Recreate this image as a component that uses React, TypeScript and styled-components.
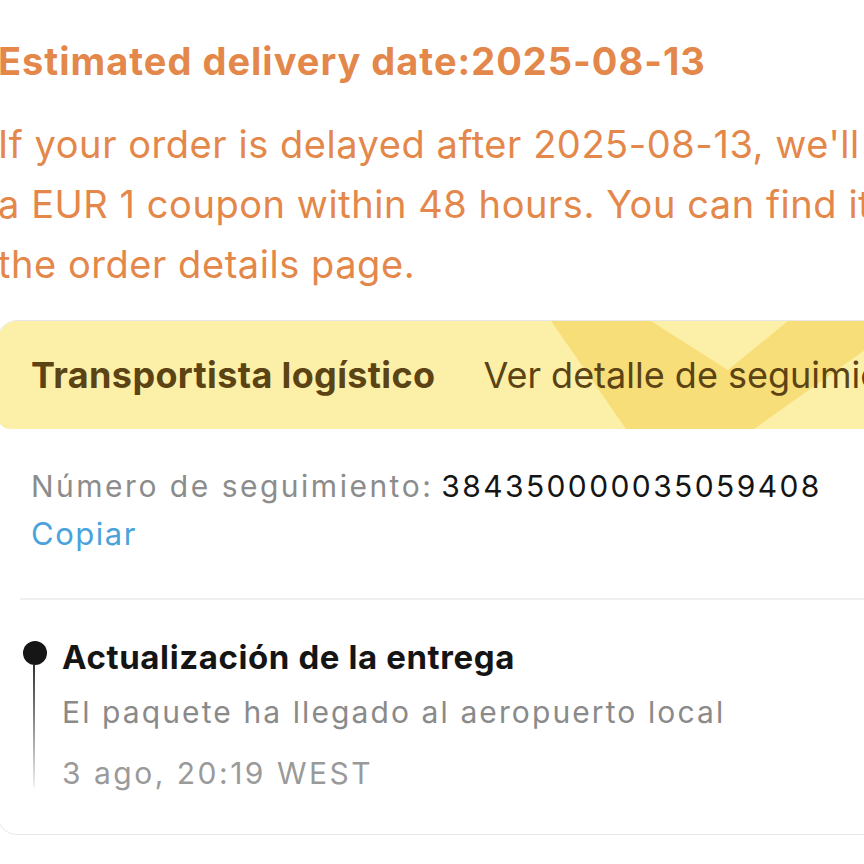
import React from 'react';
import styled, { createGlobalStyle } from 'styled-components';

const GlobalStyle = createGlobalStyle`
  html, body {
    margin: 0;
    padding: 0;
    background: #ffffff;
    overflow: hidden;
  }
  body {
    font-family: Inter, Lato, sans-serif;
  }
`;

const ORANGE = '#e3884a';
const BROWN = '#5b4314';

const Page = styled.div`
  width: 864px;
  height: 864px;
  overflow: hidden;
  background: #ffffff;
`;

const Content = styled.div`
  width: 940px;
  margin-left: -3px;
  padding-top: 35px;
  display: flex;
  flex-direction: column;
`;

const Notice = styled.section`
  display: flex;
  flex-direction: column;
  gap: 27px;
  padding-left: 1px;
  color: ${ORANGE};
`;

const NoticeTitle = styled.h2`
  margin: 0;
  font-size: 38px;
  line-height: 52px;
  font-weight: 700;
  letter-spacing: 1px;
  white-space: nowrap;
`;

const NoticeText = styled.p`
  margin: 0;
  font-size: 38px;
  line-height: 60px;
  font-weight: 400;
  letter-spacing: 0.55px;
  white-space: nowrap;
`;

const Card = styled.div`
  margin-top: 26px;
  border: 1.5px solid #e7e7e7;
  border-radius: 20px;
  overflow: hidden;
  padding-bottom: 33px;
`;

const Banner = styled.div`
  position: relative;
  height: 108px;
  background: #fcf0a9;
  border-radius: 12px;
  display: flex;
  align-items: center;
  gap: 48px;
  padding-left: 33px;
  overflow: hidden;
`;

const BannerArt = styled.svg`
  position: absolute;
  top: 0;
  left: 0;
  width: 940px;
  height: 108px;
`;

const Carrier = styled.span`
  position: relative;
  font-size: 36px;
  line-height: 44px;
  font-weight: 700;
  letter-spacing: 0.35px;
  color: ${BROWN};
  white-space: nowrap;
`;

const TrackLink = styled.span`
  position: relative;
  font-size: 36px;
  line-height: 44px;
  font-weight: 400;
  color: ${BROWN};
  white-space: nowrap;
`;

const Tracking = styled.div`
  display: flex;
  flex-direction: column;
  padding: 33px 0 0 33px;
`;

const TrackRow = styled.div`
  font-size: 30px;
  line-height: 48px;
  white-space: nowrap;
`;

const TrackLabel = styled.span`
  color: #8c8c8c;
  letter-spacing: 2.5px;
`;

const TrackNumber = styled.span`
  color: #151515;
  margin-left: 8px;
  letter-spacing: 2.4px;
`;

const CopyLink = styled.button`
  all: unset;
  align-self: flex-start;
  font-size: 31px;
  line-height: 48px;
  letter-spacing: 1.5px;
  color: #4aa3dc;
  cursor: pointer;
`;

const Divider = styled.hr`
  margin: 40px 0 0 22px;
  border: none;
  border-top: 2px solid #efefef;
`;

const Timeline = styled.ol`
  list-style: none;
  margin: 0;
  padding: 35px 0 0 24px;
`;

const Event = styled.li`
  display: grid;
  grid-template-columns: 26px 1fr;
  column-gap: 14px;
`;

const Rail = styled.div`
  display: flex;
  flex-direction: column;
  align-items: center;
`;

const Dot = styled.span`
  width: 24px;
  height: 24px;
  border-radius: 50%;
  background: #161616;
  margin-top: 6px;
`;

const Line = styled.span`
  width: 2px;
  flex: 1;
  margin: 0 0 14px -2px;
  background: linear-gradient(#333333, #f0f0f0);
`;

const EventBody = styled.div`
  display: flex;
  flex-direction: column;
  gap: 5px;
`;

const EventTitle = styled.div`
  font-size: 33px;
  line-height: 44px;
  font-weight: 700;
  letter-spacing: 0.6px;
  color: #151515;
  white-space: nowrap;
`;

const EventText = styled.div<{ faded?: boolean }>`
  font-size: 30px;
  line-height: 56px;
  letter-spacing: ${(p) => (p.faded ? '2.5px' : '2.1px')};
  color: ${(p) => (p.faded ? '#9a9a9a' : '#8a8a8a')};
  white-space: nowrap;
`;

export default function App() {
  return (
    <Page>
      <GlobalStyle />
      <Content>
        <Notice>
          <NoticeTitle>Estimated delivery date:2025-08-13</NoticeTitle>
          <NoticeText>
            If your order is delayed after 2025-08-13, we'll send you
            <br />a EUR 1 coupon within 48 hours. You can find it on
            <br />
            the order details page.
          </NoticeText>
        </Notice>
        <Card>
          <Banner>
            <BannerArt viewBox="0 0 940 108" preserveAspectRatio="none">
              <polygon points="553,0 653,0 730,49 790,0 908,0 756,108 628,108" fill="#f7de78" />
              <polygon points="908,0 940,0 940,0" fill="#f7de78" />
            </BannerArt>
            <Carrier>Transportista logístico</Carrier>
            <TrackLink>Ver detalle de seguimiento</TrackLink>
          </Banner>
          <Tracking>
            <TrackRow>
              <TrackLabel>Número de seguimiento:</TrackLabel>
              <TrackNumber>384350000035059408</TrackNumber>
            </TrackRow>
            <CopyLink>Copiar</CopyLink>
          </Tracking>
          <Divider />
          <Timeline>
            <Event>
              <Rail>
                <Dot />
                <Line />
              </Rail>
              <EventBody>
                <EventTitle>Actualización de la entrega</EventTitle>
                <EventText>El paquete ha llegado al aeropuerto local</EventText>
                <EventText faded>3 ago, 20:19 WEST</EventText>
              </EventBody>
            </Event>
          </Timeline>
        </Card>
      </Content>
    </Page>
  );
}
